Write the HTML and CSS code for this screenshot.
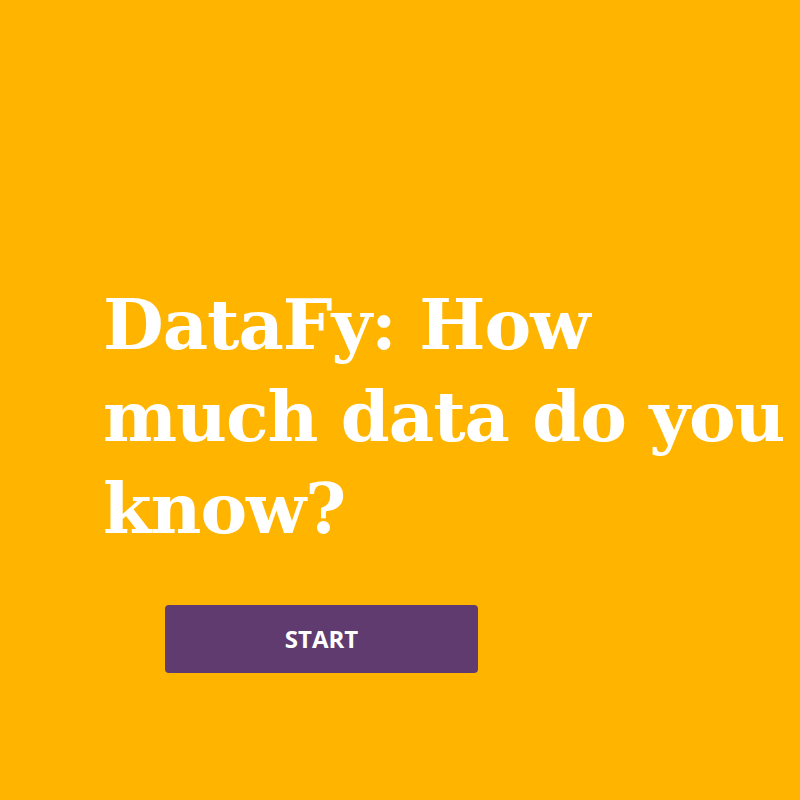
FILE: index.html
```html
<!DOCTYPE html>
<html>
<head>
<meta charset="utf-8">
<link rel="stylesheet" href="styles.css">
</head>
<body>
<main class="page">
  <h1 class="title">DataFy: How much data do you know?</h1>
  <div class="actions">
    <button class="start">START</button>
  </div>
</main>
</body>
</html>
```
FILE: styles.css
```css
html, body {
  margin: 0;
  padding: 0;
  background: #ffb500;
}
.page {
  width: 800px;
  height: 800px;
  box-sizing: border-box;
  padding: 279px 0 0 103px;
  display: flex;
  flex-direction: column;
}
.title {
  margin: 0;
  width: 690px;
  font-family: "DejaVu Serif", serif;
  font-weight: 700;
  font-size: 70px;
  line-height: 92px;
  letter-spacing: -1px;
  color: #ffffff;
}
.actions {
  padding: 50px 0 0 62px;
}
.start {
  width: 313px;
  height: 68px;
  padding: 0;
  background: #603b70;
  border: none;
  border-radius: 4px;
  color: #ffffff;
  font-family: "Open Sans", sans-serif;
  font-weight: 700;
  font-size: 24px;
  line-height: 64px;
  vertical-align: top;
}
```
